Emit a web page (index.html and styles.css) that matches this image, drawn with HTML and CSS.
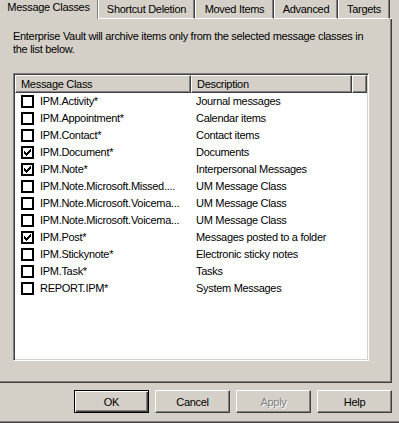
FILE: index.html
```html
<!DOCTYPE html>
<html lang="en">
<head>
    <meta charset="UTF-8">
    <title>Message Classes</title>
    <link rel="stylesheet" href="styles.css">
</head>
<body>
    <div class="tabstrip">
        <div class="tab tab-active tab-classes">Message Classes</div>
        <div class="tab tab-shortcut">Shortcut Deletion</div>
        <div class="tab tab-moved">Moved Items</div>
        <div class="tab tab-advanced">Advanced</div>
        <div class="tab tab-targets">Targets</div>
        <div class="tab-filler"></div>
    </div>

    <div class="panel">
        <p class="intro">Enterprise Vault will archive items only from the selected message classes in the list below.</p>

        <div class="listview">
            <div class="lv-header">
                <div class="lv-head lv-head-class">Message Class</div>
                <div class="lv-head lv-head-desc">Description</div>
                <div class="lv-head lv-head-rest"></div>
            </div>
            <div class="lv-body">
                <div class="lv-row"><span class="check"></span><span class="lv-class">IPM.Activity*</span><span class="lv-desc">Journal messages</span></div>
                <div class="lv-row"><span class="check"></span><span class="lv-class">IPM.Appointment*</span><span class="lv-desc">Calendar items</span></div>
                <div class="lv-row"><span class="check"></span><span class="lv-class">IPM.Contact*</span><span class="lv-desc">Contact items</span></div>
                <div class="lv-row"><span class="check"><svg viewBox="0 0 9 9" width="9" height="9"><path d="M1 3h1v3H1zM2 4h1v3H2zM3 5h1v3H3zM4 4h1v3H4zM5 3h1v3H5zM6 2h1v3H6zM7 1h1v3H7z"/></svg></span><span class="lv-class">IPM.Document*</span><span class="lv-desc">Documents</span></div>
                <div class="lv-row"><span class="check"><svg viewBox="0 0 9 9" width="9" height="9"><path d="M1 3h1v3H1zM2 4h1v3H2zM3 5h1v3H3zM4 4h1v3H4zM5 3h1v3H5zM6 2h1v3H6zM7 1h1v3H7z"/></svg></span><span class="lv-class">IPM.Note*</span><span class="lv-desc">Interpersonal Messages</span></div>
                <div class="lv-row"><span class="check"></span><span class="lv-class">IPM.Note.Microsoft.Missed....</span><span class="lv-desc">UM Message Class</span></div>
                <div class="lv-row"><span class="check"></span><span class="lv-class">IPM.Note.Microsoft.Voicema...</span><span class="lv-desc">UM Message Class</span></div>
                <div class="lv-row"><span class="check"></span><span class="lv-class">IPM.Note.Microsoft.Voicema...</span><span class="lv-desc">UM Message Class</span></div>
                <div class="lv-row"><span class="check"><svg viewBox="0 0 9 9" width="9" height="9"><path d="M1 3h1v3H1zM2 4h1v3H2zM3 5h1v3H3zM4 4h1v3H4zM5 3h1v3H5zM6 2h1v3H6zM7 1h1v3H7z"/></svg></span><span class="lv-class">IPM.Post*</span><span class="lv-desc">Messages posted to a folder</span></div>
                <div class="lv-row"><span class="check"></span><span class="lv-class">IPM.Stickynote*</span><span class="lv-desc">Electronic sticky notes</span></div>
                <div class="lv-row"><span class="check"></span><span class="lv-class">IPM.Task*</span><span class="lv-desc">Tasks</span></div>
                <div class="lv-row"><span class="check"></span><span class="lv-class">REPORT.IPM*</span><span class="lv-desc">System Messages</span></div>
            </div>
        </div>
    </div>

    <div class="buttons">
        <button class="btn btn-default">OK</button>
        <button class="btn">Cancel</button>
        <button class="btn btn-disabled">Apply</button>
        <button class="btn">Help</button>
    </div>
    <div class="bottom-edge"></div>
</body>
</html>
```

FILE: styles.css
```css
html, body {
    margin: 0;
    padding: 0;
}
body {
    width: 399px;
    height: 423px;
    overflow: hidden;
    background-color: #d4d0c8;
    color: #000;
    font-family: "Liberation Sans", Arial, sans-serif;
    font-size: 11px;
    line-height: 13px;
    letter-spacing: -0.3px;
}

/* tabs */
.tabstrip {
    display: flex;
    width: 392px;
    height: 19px;
}
.tab {
    box-sizing: border-box;
    height: 19px;
    padding-top: 3px;
    text-align: center;
    white-space: nowrap;
    border-left: 1px solid #fff;
    border-right: 1px solid #404040;
    border-bottom: 1px solid #fff;
    box-shadow: inset -1px 0 #808080;
}
.tab-active {
    padding-top: 1px;
    border-left: none;
    border-bottom: none;
    border-right: 1px solid #808080;
    box-shadow: none;
}
.tab-classes { width: 98px; }
.tab-shortcut { width: 97px; }
.tab-moved { width: 79px; }
.tab-advanced { width: 64px; }
.tab-targets { width: 52px; }
.tab-filler {
    flex: 1;
    box-sizing: border-box;
    height: 19px;
    border-bottom: 1px solid #fff;
}

/* panel */
.panel {
    box-sizing: border-box;
    width: 392px;
    height: 364px;
    padding: 11px 0 0 13px;
    border-right: 1px solid #404040;
    border-bottom: 1px solid #404040;
    box-shadow: inset -1px -1px #808080;
}
.intro {
    margin: 0 0 17px;
    width: 360px;
}

/* list view */
.listview {
    box-sizing: border-box;
    width: 356px;
    height: 288px;
    background-color: #fff;
    border: 1px solid;
    border-color: #808080 #fff #fff #808080;
    box-shadow: inset 1px 1px #404040, inset -1px -1px #d4d0c8;
    padding: 1px;
    display: flex;
    flex-direction: column;
}
.lv-header {
    display: flex;
    height: 18px;
}
.lv-head {
    box-sizing: border-box;
    height: 18px;
    padding: 2px 0 0 5px;
    background-color: #d4d0c8;
    border-top: 1px solid #fff;
    border-left: 1px solid #fff;
    border-right: 1px solid #404040;
    border-bottom: 1px solid #404040;
    box-shadow: inset -1px -1px #808080;
    white-space: nowrap;
}
.lv-head-class { width: 176px; }
.lv-head-desc { width: 161px; }
.lv-head-rest { flex: 1; }

.lv-row {
    display: flex;
    align-items: center;
    height: 17px;
    padding-left: 6px;
    white-space: nowrap;
    line-height: 17px;
}
.check {
    box-sizing: border-box;
    width: 13px;
    height: 13px;
    border: 2px solid #000;
    background-color: #fff;
    display: flex;
}
.check svg {
    display: block;
    shape-rendering: crispEdges;
}
.lv-class {
    width: 151px;
    margin-left: 6px;
    overflow: hidden;
}
.lv-desc {
    padding-left: 5px;
}

/* buttons */
.buttons {
    display: flex;
    justify-content: flex-end;
    gap: 6px;
    padding-right: 7px;
    margin-top: 7px;
}
.btn {
    box-sizing: border-box;
    width: 75px;
    height: 23px;
    padding: 0;
    font-family: inherit;
    font-size: 11px;
    letter-spacing: -0.3px;
    color: #000;
    background-color: #d4d0c8;
    border: 1px solid;
    border-color: #fff #404040 #404040 #fff;
    box-shadow: inset -1px -1px #808080;
    border-radius: 0;
}
.btn-default {
    border-color: #000;
    box-shadow: inset 1px 1px #fff, inset -1px -1px #404040, inset -2px -2px #808080;
}
.btn-disabled {
    color: #808080;
    text-shadow: 1px 1px #fff;
}
.bottom-edge {
    margin-top: 8px;
    height: 2px;
    border-top: 1px solid #808080;
    background-color: #404040;
}
```
